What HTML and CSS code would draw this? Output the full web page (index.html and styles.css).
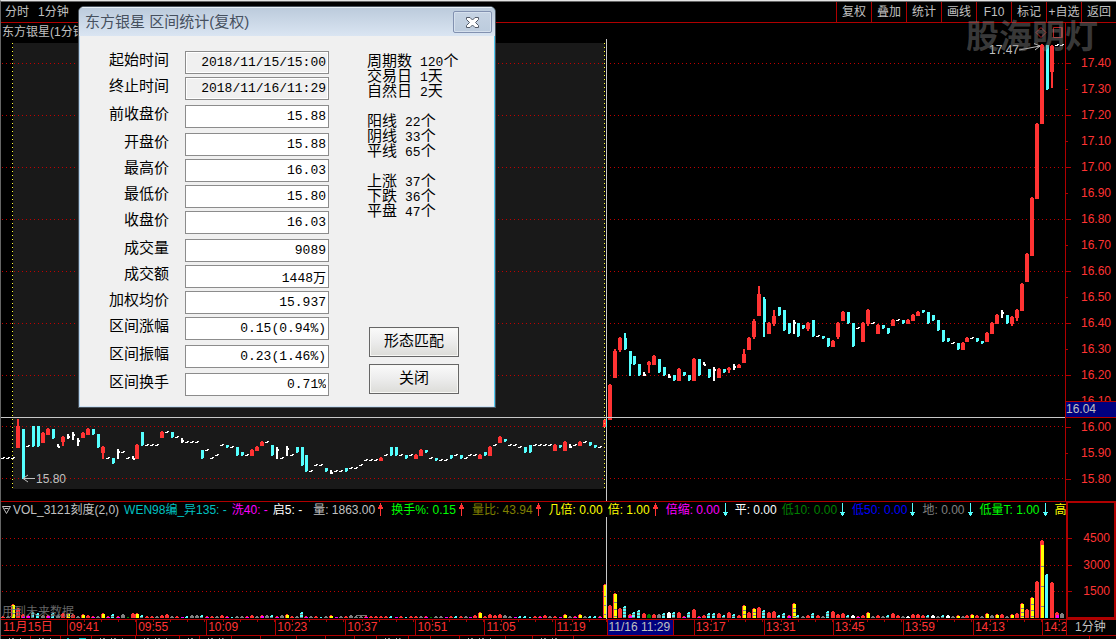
FILE: index.html
```html
<!DOCTYPE html>
<html lang="zh-CN">
<head>
<meta charset="utf-8">
<title>东方银星 1分钟</title>
<link rel="stylesheet" href="styles.css">
</head>
<body>
<svg class="defs" aria-hidden="true">
  <symbol id="up" viewBox="0 0 11 13"><path d="M5 0h1v2h1v2h1v2h-2v7h-1v-7h-2v-2h1v-2h1z" fill="#f33"/></symbol>
  <symbol id="down" viewBox="0 0 10 13"><path d="M5 0h1v9h2v1h-1v2h-1v1h-1v-1h-1v-2h-1v-1h2z" fill="#5ff"/></symbol>
</svg>
<header class="toolbar">
  <nav class="periods"><button>分时</button><button>1分钟</button></nav>
  <nav class="tools"><button>复权</button><button>叠加</button><button>统计</button><button>画线</button><button>F10</button><button>标记</button><button>+自选</button><button>返回</button></nav>
</header>

<main class="price">
  <section class="plot">
    <h1 class="symbol">东方银星(1分钟)</h1>
    <svg class="canvas" viewBox="1 23 1064 478" preserveAspectRatio="none" shape-rendering="crispEdges">
      <rect x="13" y="43" width="592" height="446" fill="#191919"/>
      <path class="grid" d="M2 63.5H1065M2 115.500H1065M2 167.500H1065M2 219.500H1065M2 271.500H1065M2 323.500H1065M2 375.500H1065M2 426.500H1065M2 478.500H1065"/>
      <g id="candles"></g>
      <path class="range" d="M12.500 43V489M604.500 43V489"/>
      <path class="cross" d="M606.500 39V501M1 417.500H1065"/>
      <path d="M606 419h1v8h-1z" fill="#5ff"/>
      <g fill="none" stroke="#c0c0c0" shape-rendering="auto">
        <path d="M23 478.500h12M28 475l-5 3.500 5 3.500"/>
        <path d="M1019 50l21-4M1034 43.500l6 2.500-5 4"/>
      </g>
      <g fill="none" stroke="#b82020" shape-rendering="auto">
        <path d="M1036 32.500l5-5 5 5-5 5z"/>
        <path d="M1053.500 27.500h8v10h-8zM1060 27.500h2.500v10h-2.500"/>
      </g>
    </svg>
    <span class="mark low">15.80</span>
    <span class="mark high">17.47</span>
  </section>
  <aside class="axis price-axis">
    <span>17.40</span><span>17.30</span><span>17.20</span><span>17.10</span><span>17.00</span><span>16.90</span><span>16.80</span><span>16.70</span><span>16.60</span><span>16.50</span><span>16.40</span><span>16.30</span><span>16.20</span><span>16.10</span><span>16.00</span><span>15.90</span><span>15.80</span>
    <output class="cursor-price">16.04</output>
  </aside>
  <div class="watermark">股海明灯</div>
</main>

<section class="volume">
  <div class="volume-main">
    <div class="legend">
      <span class="silver name"><svg width="9" height="9" viewBox="0 0 9 9"><path d="M.5 1.500h8l-4 7zM2.500 3.500h4" fill="none" stroke="#c0c0c0"/></svg>VOL_3121刻度(2,0)</span>
      <span class="teal">WEN98编_异135: -</span>
      <span class="magenta">洗40: -</span>
      <span class="white">启5: -</span>
      <span class="silver apart">量: 1863.00<svg class="arrow"><use href="#up"/></svg></span>
      <span class="lime">换手%: 0.15<svg class="arrow"><use href="#up"/></svg></span>
      <span class="olive">量比: 43.94<svg class="arrow"><use href="#up"/></svg></span>
      <span class="yellow">几倍: 0.00</span>
      <span class="yellow">倍: 1.00<svg class="arrow"><use href="#up"/></svg></span>
      <span class="magenta">倍缩: 0.00<svg class="arrow falling"><use href="#down"/></svg></span>
      <span class="white">平: 0.00</span>
      <span class="green">低10: 0.00<svg class="arrow falling"><use href="#down"/></svg></span>
      <span class="blue">低50: 0.00<svg class="arrow falling"><use href="#down"/></svg></span>
      <span class="gray">地: 0.00<svg class="arrow falling"><use href="#down"/></svg></span>
      <span class="lime">低量T: 1.00<svg class="arrow falling"><use href="#down"/></svg></span>
      <span class="yellow">高</span>
    </div>
    <div class="plot">
      <span class="note">用到未来数据</span>
      <svg class="canvas" viewBox="1 517 1065 102" preserveAspectRatio="none" shape-rendering="crispEdges">
        <path class="grid" d="M2 538.500H1066M2 565.500H1066M2 591.500H1066"/>
        <g id="volumes"></g>
        <path class="cross" d="M606.500 517V619"/>
        <path d="M356 615.500h11M360 616v2" stroke="#777" fill="none"/>
      </svg>
    </div>
  </div>
  <aside class="axis volume-axis"><span>4500</span><span>3000</span><span>1500</span></aside>
</section>

<footer>
  <div class="times">
    <span>11月15日</span><span class="t">09:41</span><span class="t">09:55</span><span class="t">10:09</span><span class="t">10:23</span><span class="t">10:37</span><span class="t">10:51</span><span class="t">11:05</span><span class="t">11:19</span><span class="now">11/16 11:29</span><span></span><span class="t">13:17</span><span class="t">13:31</span><span class="t">13:45</span><span class="t">13:59</span><span class="t">14:13</span><span class="t">14:27</span><span class="period">1分钟</span>
  </div>
  <div class="tabs"><i class="on"></i><i class="on"></i><i class="on current"></i><i class="on"></i><i class="on"></i><i class="on"></i><i class="on"></i><i></i><i></i><i></i><i></i><i></i><i class="on"></i><i></i><i></i><i class="on"></i><i></i><i class="on"></i><i></i><i></i></div>
</footer>

<form class="dialog" role="dialog" aria-labelledby="dialog-title">
  <div class="titlebar">
    <h2 id="dialog-title">东方银星 区间统计(复权)</h2>
    <button type="button" class="close" aria-label="关闭窗口"><svg width="15" height="13" viewBox="0 0 15 13"><path d="M1.500 1.500h3.500l2.500 2.500 2.500-2.500h3.500v2l-3 3 3 3v2h-3.500l-2.500-2.500-2.500 2.500h-3.500v-2l3-3-3-3z" fill="#fff" stroke="#535a68"/></svg></button>
  </div>
  <div class="content">
    <div class="fields">
      <div class="group">
        <label>起始时间<input readonly class="fixed" value="2018/11/15/15:00"></label>
        <label>终止时间<input readonly class="fixed" value="2018/11/16/11:29"></label>
      </div>
      <div class="group"><label>前收盘价<input value="15.88"></label></div>
      <div class="group">
        <label>开盘价<input value="15.88"></label>
        <label>最高价<input value="16.03"></label>
        <label>最低价<input value="15.80"></label>
        <label>收盘价<input value="16.03"></label>
      </div>
      <div class="group">
        <label>成交量<input value="9089"></label>
        <label>成交额<input value="1448万"></label>
        <label>加权均价<input value="15.937"></label>
        <label>区间涨幅<input value="0.15(0.94%)"></label>
      </div>
      <div class="group"><label>区间振幅<input value="0.23(1.46%)"></label></div>
      <div class="group"><label>区间换手<input value="0.71%"></label></div>
    </div>
    <div class="side">
      <ul><li>周期数<b>120</b>个</li><li>交易日<b>1</b>天</li><li>自然日<b>2</b>天</li></ul>
      <ul><li>阳线<b>22</b>个</li><li>阴线<b>33</b>个</li><li>平线<b>65</b>个</li></ul>
      <ul><li>上涨<b>37</b>个</li><li>下跌<b>36</b>个</li><li>平盘<b>47</b>个</li></ul>
      <div class="actions"><button type="button">形态匹配</button><button type="button">关闭</button></div>
    </div>
  </div>
</form>
<script src="chart.js"></script>
</body>
</html>
```
FILE: styles.css
```css
* { box-sizing: border-box; }
body {
  margin: 0; height: 100vh; display: flex; flex-direction: column; position: relative; overflow: hidden;
  background: #000; color: #c0c0c0; border-top: 1px solid #e4e4e4; border-left: 1px solid #666;
  font: 12px/14px "Liberation Sans", "Noto Sans CJK SC", sans-serif;
}
button { font: inherit; color: inherit; background: none; border: 0; padding: 0; white-space: nowrap; }
h1, h2, ul { margin: 0; padding: 0; font-weight: normal; font-size: inherit; list-style: none; }
.defs { position: absolute; width: 0; height: 0; }

.toolbar { display: flex; justify-content: space-between; border-top: 1px solid #666; border-bottom: 1px solid #b00000; }
.periods { display: flex; gap: 9px; padding-left: 4px; }
.toolbar button { height: 20px; }
.tools { display: grid; grid-template-columns: repeat(8, 35px); }
.tools button { border-left: 1px solid #b00000; }

.price { flex: 478 1 0; min-height: 0; display: flex; position: relative; }
.plot { flex: 1; min-width: 0; min-height: 0; position: relative; }
.canvas { display: block; width: 100%; height: 100%; }
.symbol { position: absolute; left: 1px; top: 2px; }
.grid { stroke: #c00000; stroke-dasharray: 1 3; }
.range { stroke: #ff3; stroke-dasharray: 1 3; }
.cross { stroke: #c8c8c8; }
.mark { position: absolute; }
.low { left: 35px; bottom: 15px; }
.high { right: 46px; top: 20px; }
.watermark {
  position: absolute; right: 18px; top: -9px; font: bold 33px/40px "Noto Sans CJK SC", sans-serif;
  color: rgba(130, 130, 130, .45);
}

.axis { display: flex; flex-direction: column; justify-content: space-between; color: #f33; position: relative; }
.axis span { position: relative; }
.axis span::before { content: ""; position: absolute; left: 0; top: 7px; width: 2px; height: 1px; background: #b00000; }
.axis span:nth-child(odd)::before { width: 5px; }
.price-axis { width: 51px; border-left: 1px solid #b00000; padding: 33px 0 15px; }
.price-axis span { padding-left: 15px; }
.cursor-price {
  position: absolute; left: 0; right: 0; top: 79%; height: 17px; line-height: 15px;
  background: #000080; color: #c0c0c0; border-top: 1px solid #b00000; border-bottom: 1px solid #b00000;
}

.volume { flex: 118 1 0; min-height: 0; display: flex; }
.volume-main { flex: 1; min-width: 0; display: flex; flex-direction: column; border-top: 1px solid #b00000; }
.legend { display: flex; gap: 5px; height: 15px; line-height: 16px; white-space: nowrap; overflow: hidden; padding-left: 1px; }
.legend span { display: flex; flex: none; align-items: center; }
.name { gap: 2px; }
.legend .apart { margin-left: 6px; }
.arrow { width: 11px; height: 13px; }
.falling { width: 10px; }
.silver { color: #c0c0c0; } .teal { color: #00c0c0; } .magenta { color: #f0f; } .white { color: #fff; }
.lime { color: #0f0; } .olive { color: #808000; } .yellow { color: #ff0; } .green { color: #008000; }
.blue { color: #00f; } .gray { color: #808080; }
.note { position: absolute; left: 1px; bottom: 0; color: #666; }
.volume-axis { width: 50px; border: 2px solid #b00000; padding: 28px 4px 19px 0; text-align: right; }
.volume-axis span::before, .volume-axis span:nth-child(odd)::before { width: 4px; }

.times {
  display: grid; height: 17px; line-height: 15px; color: #f33; border-top: 1px solid #b00000; border-bottom: 1px solid #b00000;
  grid-template-columns: 66fr 69fr 70fr 69fr 70fr 70fr 69fr 70fr 52fr 66fr 21fr 70fr 69fr 70fr 70fr 69fr 24fr 50px;
}
.times span { min-width: 0; overflow: hidden; white-space: nowrap; padding-left: 1px; border-left: 1px solid #b00000; }
.times span:first-child { border-left: 0; padding-left: 2px; }
.times .t { background: repeating-linear-gradient(to right, transparent 0 16px, #b00000 16px 17px) 0 0 / 100% 2px no-repeat; }
.times .now { background: #000080; color: #c0c0c0; }
.times .period { color: #c0c0c0; padding-left: 8px; }
.tabs {
  display: grid; height: 3px;
  grid-template-columns: 30px 30px 31px 44px 44px 20px 32px 29px 36px 29px 29px 22px 32px 22px 29px 46px 27px 41px 1fr 26px;
}
.tabs i { border-right: 1px solid #b00000; }
.tabs i:last-child { border-right: 0; }
.tabs .on { background: repeating-linear-gradient(to right, transparent 0 3px, #aaa 3px 4px, transparent 4px 6px, #888 6px 8px, transparent 8px 11px) 5px 2px / 60% 1px no-repeat; }
.tabs .current { background: linear-gradient(to right, #00c0c0 0 2px, transparent 2px 12px, #00c0c0 12px) 6px 2px / 19px 1px no-repeat; }

.dialog {
  position: absolute; left: 77px; top: 5px; width: 418px; color: #000; background: #f0f0f0;
  border: 1px solid #49525c; border-radius: 6px 6px 0 0; overflow: hidden;
  box-shadow: inset 1px 0 #b9d7f0, inset -1px 0 #52cdf5, inset 0 -1px #cfe2f3;
  font: 15px/15px "Noto Sans CJK SC", sans-serif;
}
.titlebar {
  display: flex; justify-content: space-between; align-items: center; height: 29px; padding: 0 3px 0 6px;
  background: linear-gradient(#bccbdc, #dae5f2); border-top: 1px solid #e9f0f7; color: #46505e;
  font: 15px/20px "Liberation Sans", "Noto Sans CJK SC", sans-serif;
}
.close {
  display: flex; align-items: center; justify-content: center; width: 39px; height: 22px;
  border: 1px solid #8291b0; border-radius: 2px; background: linear-gradient(#c6d3e3, #bccbdd); box-shadow: inset 0 0 0 1px #d5e0ed;
}
.content { display: flex; gap: 38px; padding: 15px 0 11px; }
.fields { display: flex; flex-direction: column; gap: 5px; }
.group { display: flex; flex-direction: column; gap: 3px; }
.group label { display: grid; grid-template-columns: 90px 144px; gap: 16px; align-items: start; text-align: right; }
.group input {
  width: 144px; height: 23px; margin: 0; padding: 0 2px; text-align: right; color: #000;
  background: #fff; border: 1px solid #8c8c8c; border-radius: 0; font: 13px/18px "Liberation Mono", "Noto Sans CJK SC", monospace;
}
.group .fixed { background: #f0f0f0; box-shadow: inset 0 0 0 1px #fff; }
.side { display: flex; flex-direction: column; gap: 15px; padding: 1px 0 2px; }
.side li { white-space: nowrap; height: 15px; }
.side b { font: 13px/15px "Liberation Mono", monospace; margin-left: 8px; }
.actions { display: flex; flex-direction: column; gap: 7px; margin: auto 0 0 2px; }
.actions button {
  width: 90px; height: 30px; padding-bottom: 6px; border: 1px solid #666; background: linear-gradient(#fafafa, #ececec 50%, #dcdcd8);
  box-shadow: inset 0 0 0 1px #f7f7f4;
}
```
FILE: chart.js
```js
const START = 3.3, STEP = 4.97;
const COLORS = { r: '#ff3333', c: '#55ffff', w: '#ffffff', m: '#ff00ff', y: '#ffff00', g: '#808080', n: '#008000' };

/* colour, body top, body bottom, wick top, wick bottom */
const candles = `w457-459 w457-459 w457-459 r425-448-419 c429-479 w445-447 c426-447 c426-447 r432-443 r428-435
c429-439 w444-447 r436-442-436-446 w434-439 w432-440 w438-446 r432-438 r428-435 c429-435 c434-448
r446-453-446-459 w457-459 c458-464 w449-459 w451-453 w457-459 w456-459 r444-459 c432-446 w444-446
w444-446 w444-446 r431-438 w431-433 c432-438 w436-438 w438-443 w441-443 w441-443 w441-443
c450-459 w449-451 w457-459 w454-456 w444-446 c445-448 w446-448 c447-456 c452-456 w454-456
r449-456 r446-451 r441-446 w441-443 c445-456 w447-459 w457-459 w446-456 w454-456 c447-453
c447-466 c455-472 w470-472 w464-466 w464-466 c468-472 w470-474 w470-472 w470-472 c468-472
w467-469 w467-469 w464-466 w459-461 w459-461 w459-461 r457-461 w454-456 c447-456 c447-456
w454-456 c455-459 w454-456 r454-459 r449-456 c450-453 w457-459 c458-461 w459-461 w459-461
c455-459 w454-456 c455-459 w457-459 w454-456 w454-456 r454-459 c452-456 r446-456 w444-446
r436-443 c439-442 w444-446 w444-446 w446-448 c447-453 c445-453 w444-446 w444-446 w444-446
w444-446 r444-451 c445-448 r441-451 w444-448 w444-446 r441-446 w441-443 c442-446 c445-448
w446-448 r419-427 r384-420 r350-378-349 r337-350-337-352 c338-350-333 c351-365-351-376 c356-365 c364-376 w372-376
r361-365-361-373 r355-365 c359-373 c367-376 w374-378 c375-381 r368-381 c372-376 c375-381 r358-381
c359-376 w362-365 c369-378 w367-381 r368-378 c369-373 r367-370-367-373 w364-370 r364-368 r353-363-349
r337-350 r320-337-319-339 r293-316-286 c299-323-297-337 r322-334 r315-324-310-326 c307-316 c310-331 c323-334 w320-334
c323-337 c325-329 r322-329-322-331 c320-337 w335-337 c336-339 c338-347 r340-347 r322-337-322-339 r311-321
c312-324 c323-347 w327-329 r322-342 r309-324-309-326 w322-324 r324-334 c325-329 c328-334 r319-326
w319-321 c320-324 r319-324 r314-321 r311-316 c310-313 c312-324 c315-321 c320-331 c330-342
c338-342 w342-344 c343-350 r342-350 r337-342 w337-339 c338-342 c341-344 r332-342 r322-334
r314-324 w310-318 c315-324 r316-324-316-326 r309-318-309-321 r283-311 r253-282 r197-256 r123-199 r44-124
c45-90 r45-72-45-88 w44-46 w44-46`.split(/\s+/);

/* colour and height of each bar */
const volumes = `r2 g2 y14 r10 m4 m3 c6 c5 g3 m3 c5 g3 r5 y5 r4 g2 y4 r3 m2 g2
y5 m2 c4 m2 g4 n1 r5 y5 c3 r2 r2 g2 r3 r4 g2 r2 m1 c2 g3 g3
c3 m2 r2 g2 r3 m2 c1 g2 g2 m2 r3 g2 m3 g3 c3 m2 g3 y4 r2 g2
c6 m2 g2 r2 c1 g2 y3 m1 g2 r2 g3 g2 g2 m2 r2 r2 r2 r2 c2 m1
r2 c1 r2 r2 g2 m2 n1 g2 g2 m1 r2 c2 r2 g2 m1 r3 y6 r2 r4 r3
r4 g3 g2 m1 c2 c2 c1 r2 m2 r3 g2 r2 m1 y4 g2 m2 y4 g2 c2 c2
m2 y34 r13 y25 r10 c12 m4 c6 c8 r5 n4 r4 g4 c5 w6 c6 r6 m2 c6 r9
m2 r3 c5 c5 r5 c3 r6 c4 r3 y13 r6 y10 r11 c8 r6 r7 c3 c5 m3 y15
c3 g2 r3 c5 r3 g2 c7 r7 r4 r5 c3 w3 m2 r3 y6 g2 r3 g2 c3 r5
r3 g2 w2 r4 r4 r3 c3 w3 g2 c3 w3 g2 y3 g2 r3 y4 r3 g2 y5 g3
y4 r4 g2 y4 r5 y15 r9 y21 r37 y78 c44 r36 m6 g5`.split(/\s+/);

const centre = i => Math.round(START + STEP * i);
const rect = (x, y, w, h, k) => `<rect x="${x}" y="${y}" width="${w}" height="${h}" fill="${COLORS[k]}"/>`;

document.getElementById('candles').innerHTML = candles.map((item, i) => {
  const k = item[0], x = centre(i);
  const [top, bottom, high = top, low = bottom] = item.slice(1).split('-').map(Number);
  if (k === 'r') return rect(x - 2, top + 1, 4, bottom - top - 1, k) + rect(x - 1, high, 2, low - high, k);
  if (k === 'c') return rect(x - 1, top, 3, bottom - top - 1, k) + rect(x - 1, high, 2, low - high, k);
  return bottom - top < 3
    ? rect(x - 2, top + 1, 3, 1, k) + rect(x, top, 2, 1, k)
    : rect(x - 1, top, 2, bottom - top, k) + rect(x, top + 2, 2, 2, k);
}).join('');

document.getElementById('volumes').innerHTML = volumes.map((item, i) => {
  const k = item[0], h = Number(item.slice(1)), x = centre(i), top = 618 - h;
  let out = '';
  if (k === 'y' || k === 'm') {
    out += rect(x - 2, top + 1, 4, h - 1, 'r') + rect(x - 1, top, 2, 1, 'r');
    const cap = h > 60 ? 5 : 1;
    out += k === 'y' ? rect(x - 1, top + cap, 3, h - cap, 'y') : rect(x - 1, 618 - Math.ceil(h / 2), 3, Math.ceil(h / 2), 'm');
  } else {
    out += rect(x - 2, top + 1, k === 'c' ? 3 : 4, h - 1, k) + rect(x - 1, top, 2, 1, k);
  }
  if (k === 'c' && h < 13) for (let y = top + 2; y < 618; y += 3) out += rect(x - 2, y, 3, 1, 'g');
  if (k === 'y' && h > 9) for (let y = top + Math.ceil(h / 3); y < 617; y += Math.ceil(h / 4)) out += rect(x - 1, y, 3, 1, 'g');
  return out;
}).join('');
```
